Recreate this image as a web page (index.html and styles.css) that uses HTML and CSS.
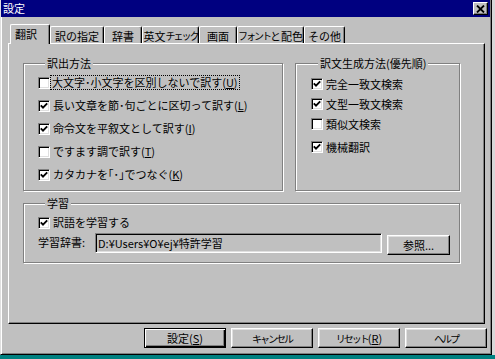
FILE: index.html
```html
<!DOCTYPE html>
<html lang="ja">
<head>
  <meta charset="UTF-8">
  <title>設定</title>
  <link rel="stylesheet" href="styles.css">
</head>
<body>
  <div class="dialog">
    <div class="titlebar">
      <span class="title">設定</span>
      <span class="close">
        <svg width="9" height="8" viewBox="0 0 9 8"><path d="M1 0.5 L8 7.5 M8 0.5 L1 7.5" stroke="#000" stroke-width="1.8" fill="none"/></svg>
      </span>
    </div>

    <div class="tabs">
      <div class="tab active">翻訳</div>
      <div class="tab">訳の指定</div>
      <div class="tab">辞書</div>
      <div class="tab">英文<span class="hw">チェック</span></div>
      <div class="tab">画面</div>
      <div class="tab"><span class="hw">フォント</span>と配色</div>
      <div class="tab">その他</div>
    </div>

    <div class="panel">
      <div class="groups-top">
        <fieldset class="group group-output">
          <legend>訳出方法</legend>
          <div class="row"><span class="check"></span><span class="label focus">大文字･小文字を区別しないで訳す(<u>U</u>)</span></div>
          <div class="row"><span class="check on"><svg width="8" height="8" viewBox="0 0 8 8"><path d="M0.8 3.4 L3 5.6 L7.2 1.4" stroke="#000" stroke-width="1.9" fill="none"/></svg></span><span class="label">長い文章を節･句ごとに区切って訳す(<u>L</u>)</span></div>
          <div class="row"><span class="check on"><svg width="8" height="8" viewBox="0 0 8 8"><path d="M0.8 3.4 L3 5.6 L7.2 1.4" stroke="#000" stroke-width="1.9" fill="none"/></svg></span><span class="label">命令文を平叙文として訳す(<u>I</u>)</span></div>
          <div class="row"><span class="check"></span><span class="label">ですます調で訳す(<u>T</u>)</span></div>
          <div class="row"><span class="check on"><svg width="8" height="8" viewBox="0 0 8 8"><path d="M0.8 3.4 L3 5.6 L7.2 1.4" stroke="#000" stroke-width="1.9" fill="none"/></svg></span><span class="label">カタカナを｢･｣でつなぐ(<u>K</u>)</span></div>
        </fieldset>

        <fieldset class="group group-method">
          <legend>訳文生成方法(優先順)</legend>
          <div class="row"><span class="check on"><svg width="8" height="8" viewBox="0 0 8 8"><path d="M0.8 3.4 L3 5.6 L7.2 1.4" stroke="#000" stroke-width="1.9" fill="none"/></svg></span><span class="label">完全一致文検索</span></div>
          <div class="row"><span class="check on"><svg width="8" height="8" viewBox="0 0 8 8"><path d="M0.8 3.4 L3 5.6 L7.2 1.4" stroke="#000" stroke-width="1.9" fill="none"/></svg></span><span class="label">文型一致文検索</span></div>
          <div class="row"><span class="check"></span><span class="label">類似文検索</span></div>
          <div class="row last"><span class="check on"><svg width="8" height="8" viewBox="0 0 8 8"><path d="M0.8 3.4 L3 5.6 L7.2 1.4" stroke="#000" stroke-width="1.9" fill="none"/></svg></span><span class="label">機械翻訳</span></div>
        </fieldset>
      </div>

      <fieldset class="group group-learn">
        <legend>学習</legend>
        <div class="row"><span class="check on"><svg width="8" height="8" viewBox="0 0 8 8"><path d="M0.8 3.4 L3 5.6 L7.2 1.4" stroke="#000" stroke-width="1.9" fill="none"/></svg></span><span class="label">訳語を学習する</span></div>
        <div class="dict-row">
          <span class="dict-label">学習辞書:</span>
          <span class="field">D:¥Users¥O¥ej¥特許学習</span>
          <span class="btn browse">参照...</span>
        </div>
      </fieldset>
    </div>

    <div class="buttons">
      <span class="btn default">設定(<u>S</u>)</span>
      <span class="btn"><span class="hw">キャンセル</span></span>
      <span class="btn"><span class="hw">リセット</span>(<u>R</u>)</span>
      <span class="btn"><span class="hw">ヘルプ</span></span>
    </div>
  </div>
</body>
</html>
```

FILE: styles.css
```css
body {
  margin: 0;
  background-color: #008080;
  font-family: "Noto Sans CJK JP", sans-serif;
  font-size: 11px;
  color: #000;
}
u {
  text-decoration: underline;
  text-underline-offset: 1px;
}
/* narrow katakana, like the half-width kana of the old UI font */
.hw {
  font-size: 10px;
  letter-spacing: -2px;
}
.dialog {
  box-sizing: border-box;
  width: 492px;
  height: 355px;
  background-color: #c0c0c0;
  border-left: 1px solid #dfdfdf;
  border-right: 1px solid #000;
  border-bottom: 1px solid #000;
  box-shadow: inset 1px 0 #fff, inset -1px -1px #808080, 3px 0 0 #d8d8d8;
}
.titlebar {
  display: flex;
  align-items: center;
  justify-content: space-between;
  height: 17px;
  margin-right: 1px;
  padding: 0 2px 0 2px;
  background-color: #000080;
}
.title {
  color: #fff;
  line-height: 17px;
}
.close {
  display: flex;
  align-items: center;
  justify-content: center;
  box-sizing: border-box;
  width: 15px;
  height: 13px;
  background-color: #c0c0c0;
  border-top: 1px solid #fff;
  border-left: 1px solid #fff;
  border-right: 1px solid #000;
  border-bottom: 1px solid #000;
  box-shadow: inset -1px -1px #808080;
}

.tabs {
  display: flex;
  align-items: flex-end;
  height: 26px;
  padding-left: 9px;
}
.tab {
  position: relative;
  display: flex;
  align-items: center;
  justify-content: center;
  box-sizing: border-box;
  height: 17px;
  padding-top: 1px;
  border-top: 1px solid #fff;
  border-left: 1px solid #fff;
  border-right: 1px solid #000;
  border-radius: 2px 2px 0 0;
  box-shadow: inset -1px 0 #808080;
  white-space: nowrap;
}
.tab.active {
  z-index: 1;
  height: 20px;
  margin-bottom: -1px;
  padding: 0 0 2px 4px;
  justify-content: flex-start;
  background-color: #c0c0c0;
}
.tab:nth-child(1) { width: 40px; }
.tab:nth-child(2) { width: 54px; }
.tab:nth-child(3) { width: 38px; }
.tab:nth-child(4) { width: 57px; }
.tab:nth-child(5) { width: 38px; }
.tab:nth-child(6) { width: 67px; }
.tab:nth-child(7) { width: 41px; }

.panel {
  box-sizing: border-box;
  width: 477px;
  height: 281px;
  margin-left: 7px;
  padding: 13px 0 0 14px;
  border-top: 1px solid #fff;
  border-left: 1px solid #fff;
  border-right: 1px solid #000;
  border-bottom: 1px solid #000;
  box-shadow: inset -1px -1px #808080;
}
.groups-top {
  display: flex;
  gap: 12px;
  height: 134px;
}
.group {
  box-sizing: border-box;
  min-width: 0;
  margin: 0;
  border: 1px solid #808080;
  box-shadow: inset 1px 1px #fff, 1px 1px 0 #fff;
}
.group legend {
  margin-left: 7px;
  padding: 0 2px;
  line-height: 13px;
  background-color: #c0c0c0;
}
.group-output {
  width: 260px;
  padding: 1px 0 0 14px;
}
.group-output .row {
  height: 23px;
}
.group-method {
  width: 165px;
  padding: 4px 0 0 15px;
}
.group-method .row {
  height: 20px;
}
.group-method .row.last {
  margin-top: 3px;
}
.group-learn {
  width: 437px;
  height: 66px;
  margin-top: 6px;
  padding: 3px 0 0 14px;
}
.group-learn .row {
  height: 19px;
}

.row {
  display: flex;
  align-items: center;
}
.check {
  display: flex;
  align-items: center;
  justify-content: center;
  box-sizing: border-box;
  flex: none;
  width: 12px;
  height: 12px;
  background-color: #fff;
  border: 1px solid;
  border-color: #808080 #fff #fff #808080;
  box-shadow: inset 1px 1px #000, inset -1px -1px #dfdfdf;
}
.label {
  margin-left: 3px;
  line-height: 13px;
  white-space: nowrap;
}
.label.focus {
  margin-left: 1px;
  padding: 0 1px;
  outline: 1px dotted #000;
}

.dict-row {
  display: flex;
  align-items: flex-start;
  height: 23px;
}
.dict-label {
  width: 57px;
  margin-top: 4px;
  line-height: 13px;
}
.field {
  box-sizing: border-box;
  width: 287px;
  height: 20px;
  margin-top: 1px;
  padding-left: 2px;
  line-height: 18px;
  border: 1px solid;
  border-color: #808080 #fff #fff #808080;
  box-shadow: inset 1px 1px #000, inset -1px -1px #dfdfdf;
  white-space: nowrap;
}
.btn {
  display: flex;
  align-items: center;
  justify-content: center;
  box-sizing: border-box;
  width: 82px;
  height: 20px;
  border-top: 1px solid #fff;
  border-left: 1px solid #fff;
  border-right: 1px solid #000;
  border-bottom: 1px solid #000;
  box-shadow: inset -1px -1px #808080, inset 1px 1px #dfdfdf;
  white-space: nowrap;
}
.btn.browse {
  width: 63px;
  margin-top: 3px;
  margin-left: 5px;
}
.btn.default {
  border: 1px solid #000;
  box-shadow: inset 1px 1px #fff, inset -1px -1px #000, inset -2px -2px #808080;
}
.buttons {
  display: flex;
  justify-content: flex-end;
  gap: 5px;
  margin-top: 4px;
  padding-right: 4px;
}
```
